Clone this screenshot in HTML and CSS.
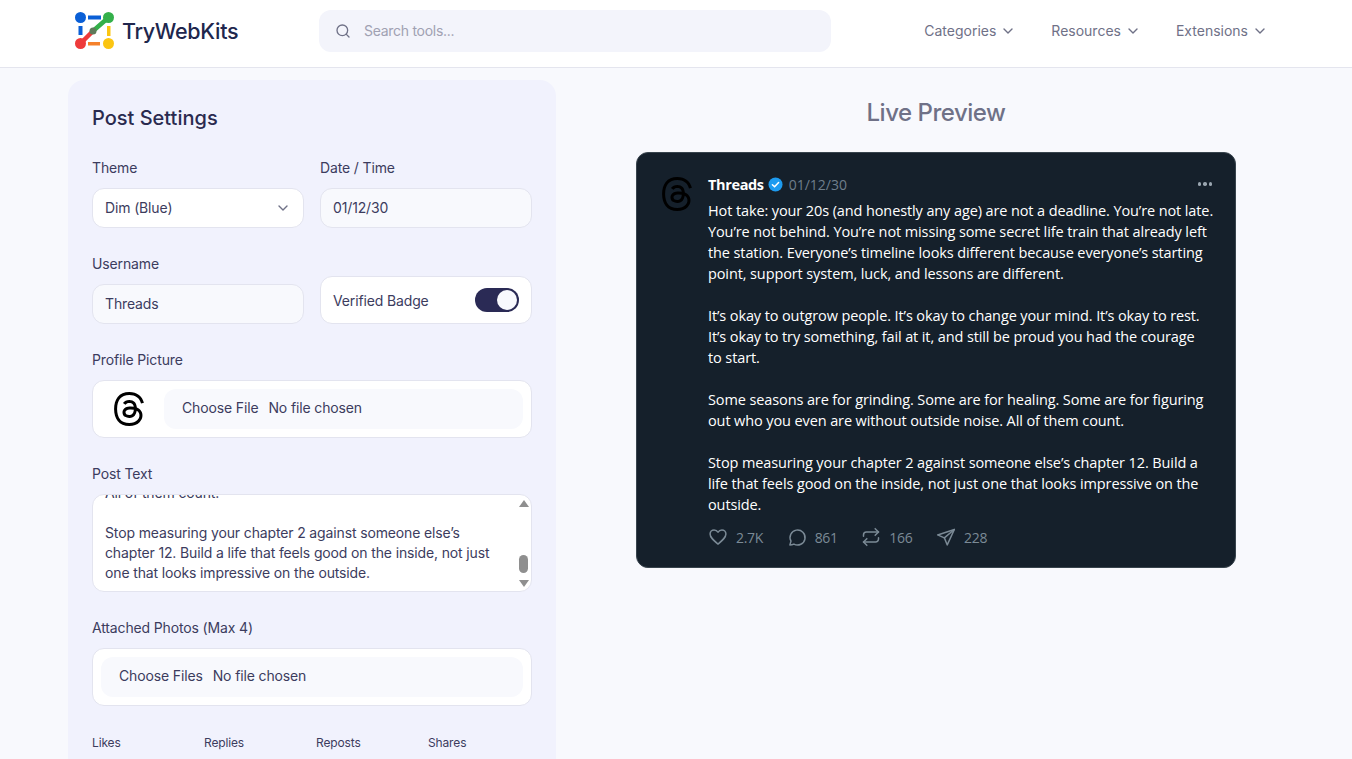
FILE: index.html
```html
<!DOCTYPE html>
<html lang="en">
<head>
<meta charset="utf-8">
<title>Threads Post Generator - TryWebKits</title>
<link rel="stylesheet" href="styles.css">
</head>
<body>
<svg class="sprite" width="0" height="0" aria-hidden="true">
  <symbol id="threads" viewBox="0 0 24 24"><path d="M12.186 24h-.007c-3.581-.024-6.334-1.205-8.184-3.509C2.35 18.44 1.5 15.586 1.472 12.01v-.017c.03-3.579.879-6.43 2.525-8.482C5.845 1.205 8.6.024 12.18 0h.014c2.746.02 5.043.725 6.826 2.098 1.677 1.29 2.858 3.13 3.509 5.467l-2.04.569c-1.104-3.96-3.898-5.984-8.304-6.015-2.91.022-5.11.936-6.54 2.717C4.307 6.504 3.616 8.914 3.589 12c.027 3.086.718 5.496 2.057 7.164 1.43 1.783 3.631 2.698 6.54 2.717 2.623-.02 4.358-.631 5.8-2.045 1.647-1.613 1.618-3.593 1.09-4.798-.31-.71-.873-1.3-1.634-1.75-.192 1.352-.622 2.446-1.284 3.272-.886 1.102-2.14 1.704-3.73 1.79-1.202.065-2.361-.218-3.259-.801-1.063-.689-1.685-1.74-1.752-2.964-.065-1.19.408-2.285 1.33-3.082.88-.76 2.119-1.207 3.583-1.291a13.853 13.853 0 0 1 3.02.142c-.126-.742-.375-1.332-.75-1.757-.513-.586-1.308-.883-2.359-.89h-.029c-.844 0-1.992.232-2.721 1.32L7.734 7.847c.98-1.454 2.568-2.256 4.478-2.256h.044c3.194.02 5.097 1.975 5.287 5.388.108.046.216.094.321.142 1.49.7 2.58 1.761 3.154 3.07.797 1.82.871 4.79-1.548 7.158-1.85 1.81-4.094 2.628-7.277 2.65Zm1.003-11.69c-.242 0-.487.007-.739.021-1.836.103-2.98.946-2.916 2.143.067 1.256 1.452 1.839 2.784 1.767 1.224-.065 2.818-.543 3.086-3.71a10.5 10.5 0 0 0-2.215-.221z"/></symbol>
  <symbol id="chev" viewBox="0 0 12 12"><path d="M2 4l4 4 4-4" fill="none" stroke="currentColor" stroke-width="1.4" stroke-linecap="round" stroke-linejoin="round"/></symbol>
</svg>

<header class="topbar">
  <a class="brand" href="#">
    <svg class="brand-mark" viewBox="0 0 40 40" width="40" height="40" aria-hidden="true">
      <rect x="14" y="4.500" width="13" height="4" fill="#0a5fd6"/>
      <rect x="4.500" y="15" width="4" height="9" fill="#0a5fd6"/>
      <rect x="33" y="15" width="3.500" height="10" fill="#fbc512"/>
      <rect x="14" y="31" width="12" height="3.500" fill="#f5812b"/>
      <path d="M19 20L34.500 6.500" stroke="#34b04a" stroke-width="4.500" stroke-linecap="round"/>
      <path d="M6.500 32.500L19 20" stroke="#ee3b3b" stroke-width="4.500" stroke-linecap="round"/>
      <circle cx="6.500" cy="6.500" r="5.500" fill="#0a5fd6"/>
      <circle cx="34.500" cy="6.500" r="5.500" fill="#34b04a"/>
      <circle cx="6.500" cy="32.500" r="5.500" fill="#ee3b3b"/>
      <circle cx="34.500" cy="32.500" r="5.500" fill="#fbc512"/>
      <circle cx="19" cy="20" r="3.500" fill="#5f7a5a"/>
    </svg>
    <span class="brand-name">TryWebKits</span>
  </a>
  <div class="search">
    <svg viewBox="0 0 24 24" width="16" height="16" fill="none" stroke="#6f7187" stroke-width="2" stroke-linecap="round"><circle cx="11" cy="11" r="8"/><path d="M21 21l-4.300-4.300"/></svg>
    <span>Search tools...</span>
  </div>
  <nav class="nav">
    <a class="nav-item" href="#">Categories <svg width="12" height="12"><use href="#chev"/></svg></a>
    <a class="nav-item" href="#">Resources <svg width="12" height="12"><use href="#chev"/></svg></a>
    <a class="nav-item" href="#">Extensions <svg width="12" height="12"><use href="#chev"/></svg></a>
  </nav>
</header>

<main class="layout">
  <section class="panel">
    <h2 class="panel-title">Post Settings</h2>

    <div class="row">
      <div class="field">
        <label class="label">Theme</label>
        <div class="control select">Dim (Blue) <svg class="select-chev" width="12" height="12"><use href="#chev"/></svg></div>
      </div>
      <div class="field">
        <label class="label">Date / Time</label>
        <div class="control tinted">01/12/30</div>
      </div>
    </div>

    <div class="row row-end">
      <div class="field">
        <label class="label">Username</label>
        <div class="control tinted">Threads</div>
      </div>
      <div class="toggle-box">
        <span>Verified Badge</span>
        <span class="toggle"><span class="knob"></span></span>
      </div>
    </div>

    <div class="field">
      <label class="label">Profile Picture</label>
      <div class="file-box">
        <svg class="file-avatar" width="34" height="36" fill="#000"><use href="#threads"/></svg>
        <div class="file-input"><span>Choose File</span><span>No file chosen</span></div>
      </div>
    </div>

    <div class="field">
      <label class="label">Post Text</label>
      <div class="textarea">
        <div class="textarea-text">All of them count.<br><br>Stop measuring your chapter 2 against someone else’s<br>chapter 12. Build a life that feels good on the inside, not just<br>one that looks impressive on the outside.</div>
        <div class="scrollbar">
          <span class="arrow-up"></span>
          <span class="thumb"></span>
          <span class="arrow-down"></span>
        </div>
      </div>
    </div>

    <div class="field">
      <label class="label">Attached Photos (Max 4)</label>
      <div class="file-box">
        <div class="file-input"><span>Choose Files</span><span>No file chosen</span></div>
      </div>
    </div>

    <div class="counts">
      <div class="count"><label class="label-small">Likes</label></div>
      <div class="count"><label class="label-small">Replies</label></div>
      <div class="count"><label class="label-small">Reposts</label></div>
      <div class="count"><label class="label-small">Shares</label></div>
    </div>
  </section>

  <section class="preview">
    <h2 class="preview-title">Live Preview</h2>
    <article class="post">
      <svg class="post-avatar" width="34" height="36" fill="#000"><use href="#threads"/></svg>
      <div class="post-body">
        <div class="post-head">
          <strong class="post-name">Threads</strong>
          <svg class="verified" viewBox="0 0 16 16" width="15" height="15"><circle cx="8" cy="8" r="7.500" fill="#1d9bf0"/><path d="M4.700 8.200l2.300 2.300 4.300-4.700" fill="none" stroke="#fff" stroke-width="1.600" stroke-linecap="round" stroke-linejoin="round"/></svg>
          <span class="post-date">01/12/30</span>
          <span class="post-menu"><i></i><i></i><i></i></span>
        </div>
        <p class="post-text">Hot take: your 20s (and honestly any age) are not a deadline. You’re not late.<br>You’re not behind. You’re not missing some secret life train that already left<br>the station. Everyone’s timeline looks different because everyone’s starting<br>point, support system, luck, and lessons are different.<br><br>It’s okay to outgrow people. It’s okay to change your mind. It’s okay to rest.<br>It’s okay to try something, fail at it, and still be proud you had the courage<br>to start.<br><br>Some seasons are for grinding. Some are for healing. Some are for figuring<br>out who you even are without outside noise. All of them count.<br><br>Stop measuring your chapter 2 against someone else’s chapter 12. Build a<br>life that feels good on the inside, not just one that looks impressive on the<br>outside.</p>
        <div class="stats">
          <span class="stat"><svg viewBox="0 0 24 24" width="20" height="20"><path d="M12 20.500C6 15.500 2.500 12.500 2.500 8.500 2.500 5.500 4.800 3.500 7.300 3.500c1.900 0 3.700 1 4.700 2.800 1-1.800 2.800-2.800 4.700-2.800 2.500 0 4.800 2 4.800 5 0 4-3.500 7-9.500 12z"/></svg>2.7K</span>
          <span class="stat"><svg viewBox="0 0 24 24" width="20" height="20"><path d="M3.500 21.500l1.300-4.500a9 9 0 1 1 3.500 3.500c-1.500.6-3.200 1-4.800 1z"/></svg>861</span>
          <span class="stat"><svg viewBox="0 0 24 24" width="20" height="20"><path d="M17 2l4 4-4 4"/><path d="M3 11V9.500A3.500 3.500 0 0 1 6.500 6H21"/><path d="M7 22l-4-4 4-4"/><path d="M21 13v1.500a3.500 3.500 0 0 1-3.500 3.500H3"/></svg>166</span>
          <span class="stat"><svg viewBox="0 0 24 24" width="20" height="20"><path d="M22 3L2 9.500l8 3.500 3.500 8.500L22 3z"/><path d="M10 13l12-10"/></svg>228</span>
        </div>
      </div>
    </article>
  </section>
</main>
</body>
</html>
```
FILE: styles.css
```css
* { box-sizing: border-box; }
html, body { height: 100%; overflow: hidden; }
body {
  margin: 0;
  background: #f8f9fd;
  color: #2a2a4f;
  font-family: Inter, "Liberation Sans", sans-serif;
  font-size: 14px;
  letter-spacing: -0.01em;
}
.sprite { position: absolute; }
a { color: inherit; text-decoration: none; }

.topbar {
  display: flex;
  align-items: center;
  height: 68px;
  padding: 0 86px 6px 74px;
  background: #fff;
  border-bottom: 1px solid #e4e5ee;
}
.brand { display: flex; align-items: center; gap: 8px; width: 245px; }
.brand-mark { flex: none; }
.brand-name { font-size: 21.500px; font-weight: 500; color: #20264d; letter-spacing: -0.015em; }
.search {
  display: flex;
  align-items: center;
  gap: 13px;
  width: 512px;
  height: 42px;
  padding: 0 16px;
  border-radius: 12px;
  background: #f3f4fb;
  color: #a0a1b2;
  letter-spacing: -0.02em;
}
.nav { display: flex; gap: 37px; margin-left: auto; }
.nav-item { display: flex; align-items: center; gap: 6px; color: #6f7187; letter-spacing: 0; }

.layout { display: flex; gap: 32px; padding: 12px 68px 0; align-items: flex-start; }
.panel {
  flex: none;
  display: flex;
  flex-direction: column;
  gap: 26px;
  width: 488px;
  height: 760px;
  padding: 24px;
  background: #f1f2fd;
  border-radius: 16px;
}
.panel-title { margin: 0; font-size: 20px; line-height: 28px; font-weight: 500; color: #2a2a4f; letter-spacing: 0; }
.row { display: grid; grid-template-columns: 1fr 1fr; gap: 16px; }
.row-end { align-items: end; }
.field { display: flex; flex-direction: column; gap: 10px; }
.label { line-height: 20px; color: #3c3c5e; }
.control {
  display: flex;
  align-items: center;
  height: 40px;
  padding: 0 12px 2px;
  border: 1px solid #e3e4ef;
  border-radius: 12px;
  color: #3c3c5e;
}
.select { justify-content: space-between; padding-right: 14px; background: #fff; }
.select-chev { color: #6f7187; margin-top: 2px; }
.tinted { background: #f8f9fd; }
.toggle-box {
  display: flex;
  align-items: center;
  justify-content: space-between;
  height: 48px;
  padding: 0 12px;
  background: #fff;
  border: 1px solid #e3e4ef;
  border-radius: 12px;
  color: #3c3c5e;
}
.toggle {
  display: flex;
  align-items: center;
  justify-content: flex-end;
  width: 44px;
  height: 24px;
  padding: 2px;
  border-radius: 12px;
  background: #2a2a55;
}
.knob { width: 20px; height: 20px; border-radius: 50%; background: #f8f9fd; }
.file-box {
  display: flex;
  align-items: center;
  height: 58px;
  padding: 0 8px;
  background: #fff;
  border: 1px solid #e3e4ef;
  border-radius: 12px;
}
.file-avatar { flex: none; margin: 0 18px 0 11px; }
.file-input {
  display: flex;
  align-items: center;
  gap: 10px;
  flex: 1;
  height: 40px;
  padding: 0 0 3px 18px;
  border-radius: 12px;
  background: #f8f9fd;
  color: #3c3c5e;
}
.textarea {
  position: relative;
  display: flex;
  height: 98px;
  background: #fff;
  border: 1px solid #e3e4ef;
  border-radius: 12px;
  overflow: hidden;
}
.textarea-text {
  flex: 1;
  align-self: flex-end;
  padding: 0 12px 8px;
  line-height: 20px;
  color: #3c3c5e;
  white-space: nowrap;
}
.scrollbar {
  position: absolute;
  top: 0;
  right: 3px;
  bottom: 0;
  display: flex;
  flex-direction: column;
  align-items: center;
  width: 9px;
  padding: 5px 0 4px;
}
.thumb { width: 9px; height: 18px; margin-top: 48px; border-radius: 5px; background: #8f8f8f; }
.arrow-up, .arrow-down { width: 0; height: 0; border-left: 5px solid transparent; border-right: 5px solid transparent; }
.arrow-up { border-bottom: 7px solid #8f8f8f; }
.arrow-down { margin-top: auto; border-top: 7px solid #8f8f8f; }
.counts { display: grid; grid-template-columns: repeat(4, 1fr); gap: 8px; }
.label-small { font-size: 12px; line-height: 22px; color: #3c3c5e; }

.preview { flex: 1; display: flex; flex-direction: column; align-items: center; }
.preview-title { margin: 17px 0 23px; font-size: 24px; line-height: 32px; font-weight: 500; color: #6f7187; letter-spacing: -0.02em; }
.post {
  display: flex;
  gap: 14px;
  width: 600px;
  padding: 19px 16px 20px 24px;
  background: #15202b;
  border: 1px solid #38444d;
  border-radius: 12px;
  font-family: "Open Sans", sans-serif;
  letter-spacing: 0;
  color: #fff;
}
.post-avatar { flex: none; margin-top: 4px; margin-left: -1px; }
.post-body { flex: 1; min-width: 0; }
.post-head { display: flex; align-items: center; gap: 4px; height: 24px; }
.post-name { font-size: 14.500px; letter-spacing: -0.025em; }
.post-date { font-size: 14px; color: #6f7e8b; margin-left: 2px; }
.post-menu { display: flex; gap: 2px; margin-left: auto; margin-right: 7px; }
.post-menu i { width: 3.500px; height: 3.500px; border-radius: 50%; background: #9aa6b0; }
.post-text { margin: 4px 0 0; font-size: 14.500px; line-height: 21px; white-space: nowrap; letter-spacing: -0.11px; }
.stats { display: flex; gap: 23.500px; margin-top: 12px; }
.stat { display: flex; align-items: center; gap: 8px; font-size: 14px; color: #7b8a96; letter-spacing: -0.02em; }
.stat svg { fill: none; stroke: #7b8a96; stroke-width: 1.800; stroke-linecap: round; stroke-linejoin: round; }
```
